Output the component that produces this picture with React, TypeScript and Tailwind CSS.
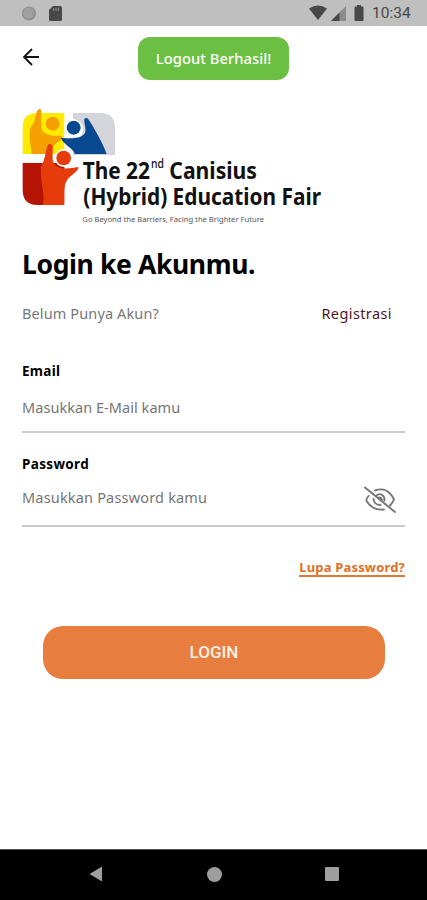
import React from "react";

function StatusBar() {
  return (
    <header className="flex h-[26px] w-full items-center justify-between bg-[#bfbfbf] pl-[21px] pr-[16px]">
      <svg width="42" height="18" viewBox="0 0 42 18" className="block">
        <circle cx="8" cy="9.500" r="7" fill="#8e8e8e" />
        <circle cx="7.500" cy="9" r="5.500" fill="#a0a0a0" />
        <path d="M32 2h7q2 0 2 2v11.500q0 1.500-1.500 1.500h-10q-1.500 0-1.500-1.500V6z" fill="#484848" />
        <path d="M32.500 4v3M35 4v3M37.500 4v3" stroke="#8a8a8a" strokeWidth="1.200" />
      </svg>
      <div className="flex items-center gap-[7px]">
        <svg width="56" height="18" viewBox="0 0 56 18" className="block">
          <path d="M0 4.500Q9-1.500 18 4.500L9 16z" fill="#484848" />
          <path d="M37 2v15H22z" fill="#8c8c8c" />
          <path d="M30.500 8.500V17H22z" fill="#484848" />
          <path d="M48 2.500V1h4v1.500h1.500q1 0 1 1V16q0 1-1 1h-7q-1 0-1-1V3.500q0-1 1-1z" fill="#484848" />
        </svg>
        <span className="relative top-[1px] w-[39px] whitespace-nowrap font-['Roboto',sans-serif] text-[15.500px] leading-none text-[#484848]">10:34</span>
      </div>
    </header>
  );
}

function Logo() {
  return (
    <svg width="320" height="130" viewBox="0 0 960 390" className="-ml-[7px] block" fontFamily="'Noto Sans', sans-serif">
      <path d="M23 162V82Q23 39 66 39H148V162z" fill="#ffea00" />
      <path d="M50 162C48 132 38 103 48 80C60 69 61 48 66 33Q73 22 79 31C80 61 73 82 85 96C99 109 121 108 140 107C145 119 124 126 116 137C108 146 109 154 110 162z" fill="#f5a000" />
      <circle cx="113" cy="71" r="21" fill="#f5a000" />
      <path d="M174 39H254Q300 39 300 84V165H174z" fill="#d3d5da" />
      <path d="M148 70Q176 42 202 75Q211 97 191 112L148 110z" fill="#fff" />
      <circle cx="176" cy="83" r="21" fill="#084991" />
      <path d="M137 113C165 115 192 119 207 103C218 92 206 72 208 57Q216 49 222 61C238 86 262 126 275 162H180C173 143 145 134 137 113z" fill="#084991" />
      <path d="M23 189H148V315H67Q23 314 23 270z" fill="#b51405" />
      <circle cx="146" cy="174" r="27" fill="#fff" />
      <path d="M84 315C91 276 74 246 78 199C91 180 91 151 99 134Q108 126 113 139C114 163 109 184 120 195C136 211 167 204 190 201C193 212 169 224 158 238C143 258 149 288 147 315z" fill="#e63c0b" />
      <circle cx="146" cy="174" r="22" fill="#e63c0b" />
      <g fill="#111" fontWeight="700" fontSize="69">
        <text x="203" y="237" textLength="202" lengthAdjust="spacingAndGlyphs">The 22</text>
        <text x="408" y="203" fontSize="36" fontWeight="500" textLength="39" lengthAdjust="spacingAndGlyphs">nd</text>
        <text x="463" y="237" textLength="263" lengthAdjust="spacingAndGlyphs">Canisius</text>
        <text x="205" y="315" textLength="713" lengthAdjust="spacingAndGlyphs">(Hybrid) Education Fair</text>
      </g>
      <text x="202" y="365" fontSize="19" fill="#555" textLength="545" lengthAdjust="spacingAndGlyphs">Go Beyond the Barriers, Facing the Brighter Future</text>
    </svg>
  );
}

function EyeOff() {
  return (
    <svg width="34" height="28" viewBox="0 0 34 28" fill="none" stroke="#777" strokeWidth="1.900" strokeLinecap="round" className="block">
      <path d="M2 1.500L32 26" />
      <path d="M12 4.500C20 1.500 27 5 31 13.500Q29.500 17 27 19.500" />
      <path d="M5.500 10Q3 13 3.500 15C8 22 13 24.500 21 23.500" />
      <path d="M13.500 9.500C17 6.500 22 9 21.500 14.500" />
      <path d="M10.500 13C11 17 14 19 17.500 19" />
      <path d="M16 11.500Q18 11 19 14" />
    </svg>
  );
}

function NavBar() {
  return (
    <nav className="flex h-[51px] items-center justify-between border-t border-[#555] bg-black pb-[2px] pl-[89px] pr-[88px]">
      <svg width="14" height="16" viewBox="0 0 14 16"><path d="M.500 8L13 .500v15z" fill="#9e9e9e" /></svg>
      <span className="size-[15px] rounded-full bg-[#9e9e9e]" />
      <span className="size-[14px] rounded-[1px] bg-[#9e9e9e]" />
    </nav>
  );
}

export default function App() {
  return (
    <div className="flex h-[900px] w-[427px] flex-col overflow-hidden bg-white font-['Noto_Sans',sans-serif]">
      <StatusBar />
      <main className="flex flex-1 flex-col px-[22px]">
        <div className="flex h-[74px] items-start pt-[11px]">
          <button aria-label="Kembali" className="mt-[11px] h-[18px] w-[18px]">
            <svg width="18" height="18" viewBox="0 0 18 18" fill="none" stroke="#111" strokeWidth="1.800"><path d="M17 9H2M10 1L2 9l8 8" /></svg>
          </button>
          <div className="ml-[98px] flex h-[43px] w-[151px] items-center justify-center whitespace-nowrap rounded-[12px] bg-[#6bbf43] text-[14.800px] font-medium text-white">Logout Berhasil!</div>
        </div>
        <Logo />
        <h1 className="mt-[13px] h-[42px] whitespace-nowrap text-[26.500px] font-bold leading-[42px] tracking-[-0.370px] text-black">Login ke Akunmu.</h1>
        <div className="mt-[17px] flex h-[24px] items-center justify-between whitespace-nowrap pr-[13px] text-[14.500px]">
          <span className="tracking-[0.120px] text-[#777]">Belum Punya Akun?</span>
          <a className="tracking-[0.400px] text-[#4b1820]">Registrasi</a>
        </div>
        <label className="mt-[35px] h-[20px] text-[13.500px] font-bold leading-[20px] tracking-[0.300px] text-black">Email</label>
        <div className="mt-[10px] flex h-[42px] items-start border-b-2 border-[#cacaca] pt-[4px] text-[14.500px] leading-[24px] tracking-[0.050px] text-[#757575]">Masukkan E-Mail kamu</div>
        <label className="mt-[21px] h-[20px] text-[13.500px] font-bold leading-[20px] tracking-[0.350px] text-black">Password</label>
        <div className="mt-[10px] flex h-[43px] items-start justify-between border-b-2 border-[#cacaca] pr-[8px] pt-[1px] text-[14.500px] leading-[24px] text-[#757575]">
          <span className="tracking-[0.180px]">Masukkan Password kamu</span><span className="pt-[1px]"><EyeOff /></span>
        </div>
        <a className="mt-[31px] h-[19px] self-end whitespace-nowrap border-b-2 border-[#df7937] text-[13px] font-bold leading-[19px] tracking-[0.180px] text-[#df7028]">Lupa Password?</a>
        <button className="mr-[20px] ml-[21px] mt-[49px] h-[53px] rounded-[20px] bg-[#e77e40] font-['Roboto',sans-serif] text-[17px] font-medium text-[#fff0e4]">LOGIN</button>
      </main>
      <NavBar />
    </div>
  );
}
